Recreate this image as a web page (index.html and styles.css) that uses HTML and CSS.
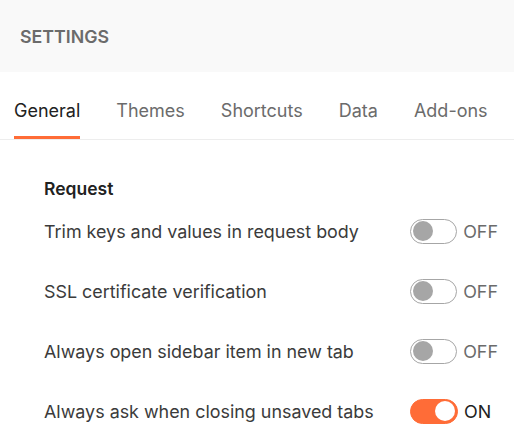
FILE: index.html
```html
<!DOCTYPE html>
<html>
<head>
<meta charset="utf-8">
<link rel="stylesheet" href="styles.css">
</head>
<body>
<div class="app">
  <header class="header">SETTINGS</header>
  <nav class="tabs">
    <div class="tab active">General</div>
    <div class="tab">Themes</div>
    <div class="tab">Shortcuts</div>
    <div class="tab">Data</div>
    <div class="tab">Add-ons</div>
  </nav>
  <section class="content">
    <h3 class="section-title">Request</h3>
    <div class="row">
      <span class="label">Trim keys and values in request body</span>
      <span class="switch-wrap"><span class="switch"><span class="knob"></span></span><span class="state">OFF</span></span>
    </div>
    <div class="row">
      <span class="label">SSL certificate verification</span>
      <span class="switch-wrap"><span class="switch"><span class="knob"></span></span><span class="state">OFF</span></span>
    </div>
    <div class="row">
      <span class="label">Always open sidebar item in new tab</span>
      <span class="switch-wrap"><span class="switch"><span class="knob"></span></span><span class="state">OFF</span></span>
    </div>
    <div class="row">
      <span class="label">Always ask when closing unsaved tabs</span>
      <span class="switch-wrap"><span class="switch on"><span class="knob"></span></span><span class="state on">ON</span></span>
    </div>
  </section>
</div>
</body>
</html>
```
FILE: styles.css
```css
* { box-sizing: border-box; }
html, body { margin: 0; padding: 0; background: #fff; }
body { font-family: Inter, "Noto Sans", sans-serif; width: 514px; height: 435px; overflow: hidden; }
.header {
  height: 72px;
  background: #f9f9f9;
  padding-left: 20px;
  display: flex;
  align-items: center;
  font-size: 17.8px;
  font-weight: 600;
  color: #6b6b6b;
}
.tabs {
  display: flex;
  gap: 36px;
  padding: 0 14px;
  height: 68px;
  border-bottom: 1px solid #ededed;
  align-items: stretch;
}
.tab {
  font-size: 18px;
  color: #6b6b6b;
  display: flex;
  align-items: center;
  padding-top: 12px;
  border-bottom: 3px solid transparent;
}
.tab.active { color: #212121; border-bottom-color: #ff6c37; }
.content { padding: 37px 0 0 44px; }
.section-title {
  margin: 0;
  font-size: 17.5px;
  font-weight: 600;
  color: #212121;
  line-height: 24px;
}
.row {
  display: flex;
  align-items: center;
  justify-content: space-between;
  width: 454px;
  height: 60px;
}
.label { font-size: 17.9px; color: #3b3b3b; }
.switch-wrap { display: flex; align-items: center; gap: 6px; width: 88px; }
.switch {
  width: 48px;
  height: 25px;
  border: 1px solid #a6a6a6;
  border-radius: 13px;
  display: flex;
  align-items: center;
  padding: 0 2px;
}
.knob { width: 20px; height: 20px; border-radius: 50%; background: #a6a6a6; }
.switch.on { background: #ff6c37; border-color: #ff6c37; justify-content: flex-end; }
.switch.on .knob { background: #fff; }
.state { font-size: 17.9px; color: #6b6b6b; }
.state.on { color: #212121; }
```
